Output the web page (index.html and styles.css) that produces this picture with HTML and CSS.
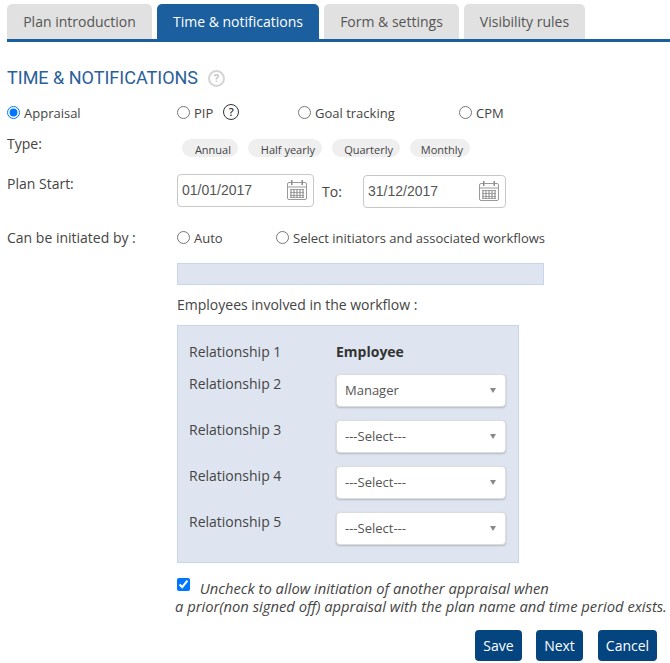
FILE: index.html
```html
<!DOCTYPE html>
<html lang="en">
<head>
    <meta charset="UTF-8">
    <meta name="viewport" content="width=device-width, initial-scale=1.0">
    <title>Time &amp; notifications</title>
    <link rel="stylesheet" href="styles.css">
</head>
<body>
    <div class="tabs">
        <a class="tab tab-intro">Plan introduction</a>
        <a class="tab tab-time active">Time &amp; notifications</a>
        <a class="tab tab-form">Form &amp; settings</a>
        <a class="tab tab-rules">Visibility rules</a>
    </div>

    <h2 class="title">TIME &amp; NOTIFICATIONS <span class="help-grey">?</span></h2>

    <div class="row row-plan">
        <label class="radio radio-first"><input type="radio" name="plan" checked>Appraisal</label>
        <div class="plan-options">
            <label class="radio opt-pip"><input type="radio" name="plan">PIP<span class="help-dark">?</span></label>
            <label class="radio opt-goal"><input type="radio" name="plan">Goal tracking</label>
            <label class="radio"><input type="radio" name="plan">CPM</label>
        </div>
    </div>

    <div class="row row-type">
        <div class="label">Type:</div>
        <div class="pills">
            <span class="pill pill-annual">Annual</span>
            <span class="pill pill-half">Half yearly</span>
            <span class="pill pill-quarter">Quarterly</span>
            <span class="pill pill-month">Monthly</span>
        </div>
    </div>

    <div class="row row-date">
        <div class="label">Plan Start:</div>
        <div class="dates">
            <div class="date">
                <span>01/01/2017</span>
                <svg class="cal" viewBox="0 0 20 20"><use href="#cal"></use></svg>
            </div>
            <span class="to">To:</span>
            <div class="date">
                <span>31/12/2017</span>
                <svg class="cal" viewBox="0 0 20 20"><use href="#cal"></use></svg>
            </div>
        </div>
    </div>

    <div class="row row-init">
        <div class="label">Can be initiated by :</div>
        <div class="init-options">
            <label class="radio opt-auto"><input type="radio" name="init">Auto</label>
            <label class="radio"><input type="radio" name="init">Select initiators and associated workflows</label>
        </div>
    </div>

    <div class="indent">
        <div class="blank-bar"></div>
        <div class="involved">Employees involved in the workflow :</div>
        <div class="panel">
            <div class="rel rel-first">
                <div class="rel-name">Relationship 1</div>
                <strong>Employee</strong>
            </div>
            <div class="rel">
                <div class="rel-name">Relationship 2</div>
                <div class="select"><select><option>Manager</option></select></div>
            </div>
            <div class="rel">
                <div class="rel-name">Relationship 3</div>
                <div class="select"><select><option>---Select---</option></select></div>
            </div>
            <div class="rel">
                <div class="rel-name">Relationship 4</div>
                <div class="select"><select><option>---Select---</option></select></div>
            </div>
            <div class="rel">
                <div class="rel-name">Relationship 5</div>
                <div class="select"><select><option>---Select---</option></select></div>
            </div>
        </div>
        <div class="note">
            <input type="checkbox" checked>
            <em class="note-first">Uncheck to allow initiation of another appraisal when</em>
            <em class="note-second">a prior(non signed off) appraisal with the plan name and time period exists.</em>
        </div>
    </div>

    <div class="actions">
        <button class="btn btn-save">Save</button>
        <button class="btn btn-next">Next</button>
        <button class="btn btn-cancel">Cancel</button>
    </div>

    <svg class="defs" width="0" height="0">
        <symbol id="cal" viewBox="0 0 20 20">
            <rect x="0.5" y="2.5" width="19" height="17" rx="1.5" fill="#fff" stroke="#9a9a9a"/>
            <path d="M1 7h18" stroke="#9a9a9a" stroke-width="1"/>
            <rect x="4" y="0" width="1.5" height="5" fill="#8c8c8c"/>
            <rect x="14.5" y="0" width="1.5" height="5" fill="#8c8c8c"/>
            <path d="M3 9.5h14M3 12.5h14M3 15.5h14M3 17.5h14" stroke="#a8a8a8" stroke-width="1"/>
            <path d="M4 9v9M7 9v9M10 9v9M13 9v9M16 9v9" stroke="#949494" stroke-width="1.2"/>
        </symbol>
    </svg>
</body>
</html>
```

FILE: styles.css
```css
body {
    margin: 0;
    padding: 4px 0 0 7px;
    font-family: "Open Sans", Arial, sans-serif;
    font-size: 14px;
    color: #444;
    background: #fff;
    overflow: hidden;
}
.tabs {
    display: flex;
    gap: 5px;
    height: 35px;
    border-bottom: 3px solid #1c5f9e;
}
.tab {
    display: block;
    height: 35px;
    line-height: 35px;
    text-align: center;
    font-size: 14px;
    border-radius: 5px 5px 0 0;
    background: #e1e1e1;
    color: #555;
}
.tab-intro { width: 145px; }
.tab-time { width: 162px; }
.tab-form { width: 135px; }
.tab-rules { width: 121px; }
.tab.active {
    background: #1c5f9e;
    color: #fff;
}
.title {
    margin: 25px 0 0;
    height: 22px;
    line-height: 22px;
    font-family: Roboto, Arial, sans-serif;
    font-size: 18px;
    font-weight: 400;
    color: #2a6099;
    display: flex;
    align-items: center;
}
.help-grey {
    width: 13px;
    height: 13px;
    margin-left: 10px;
    border: 2px solid #d4d4d4;
    border-radius: 50%;
    font-size: 11px;
    font-weight: 700;
    line-height: 13px;
    text-align: center;
    color: #c4c4c4;
}
.row {
    display: grid;
    grid-template-columns: 170px 1fr;
}
.radio {
    display: flex;
    align-items: center;
    font-size: 13px;
}
.radio input {
    width: 13px;
    height: 13px;
    margin: 0 4px 0 0;
    position: relative;
    top: -1px;
}
.row-plan {
    margin-top: 14px;
    height: 20px;
    align-items: center;
}
.plan-options, .init-options {
    display: flex;
}
.opt-pip { width: 121px; }
.opt-goal { width: 161px; }
.help-dark {
    width: 14px;
    height: 14px;
    margin: -3px 0 0 10px;
    border: 1px solid #333;
    border-radius: 50%;
    font-size: 11px;
    font-weight: 600;
    line-height: 14px;
    text-align: center;
    color: #333;
}
.row-type {
    margin-top: 11px;
    height: 31px;
}
.label {
    font-size: 14px;
    line-height: 20px;
}
.pills {
    display: flex;
    gap: 10px;
    margin-left: 5px;
    padding-top: 5px;
    align-items: flex-start;
}
.pill {
    box-sizing: border-box;
    height: 18px;
    padding-right: 7px;
    line-height: 22px;
    font-size: 11px;
    border-radius: 9px;
    background: #efefef;
    text-align: right;
    overflow: hidden;
}
.pill-annual { width: 56px; }
.pill-half { width: 74px; }
.pill-quarter { width: 68px; }
.pill-month { width: 60px; }
.row-date {
    margin-top: 9px;
    height: 34px;
}
.dates {
    display: flex;
    align-items: center;
}
.date {
    box-sizing: border-box;
    width: 137px;
    height: 33px;
    padding: 0 6px 0 4px;
    display: flex;
    align-items: center;
    justify-content: space-between;
    border: 1px solid #c8c8c8;
    border-radius: 4px;
    font-family: "Liberation Sans", Arial, sans-serif;
    font-size: 14px;
    color: #555;
}
.date:first-child { margin-top: -2px; }
.date:last-child { width: 143px; }
.to {
    width: 49px;
    padding-left: 8px;
    box-sizing: border-box;
    font-size: 14px;
}
.cal {
    width: 20px;
    height: 20px;
}
.row-init {
    margin-top: 20px;
    height: 20px;
}
.opt-auto { width: 99px; }
.indent {
    margin-left: 170px;
}
.blank-bar {
    box-sizing: border-box;
    width: 367px;
    height: 22px;
    margin-top: 15px;
    background: #dfe5f0;
    border: 1px solid #c9d6ea;
}
.involved {
    margin-top: 10px;
    height: 20px;
    line-height: 20px;
}
.panel {
    box-sizing: border-box;
    width: 342px;
    height: 238px;
    margin-top: 10px;
    padding: 16px 0 0 11px;
    background: #dfe5f0;
    border: 1px solid #c9d6ea;
}
.rel {
    display: grid;
    grid-template-columns: 147px 170px;
    height: 46px;
    line-height: 20px;
}
.rel-first {
    height: 32px;
}
.rel-first strong {
    line-height: 20px;
    color: #333;
}
.select {
    position: relative;
    height: 33px;
}
.select select {
    appearance: none;
    display: block;
    box-sizing: border-box;
    width: 100%;
    height: 33px;
    padding: 0 8px 2px;
    border: 1px solid #dcdcdc;
    border-radius: 4px;
    box-shadow: 0 1px 2px rgba(0, 0, 0, 0.2);
    background: #fff;
    font-family: "Open Sans", Arial, sans-serif;
    font-size: 13px;
    color: #555;
}
.select::after {
    content: "";
    position: absolute;
    top: 14px;
    right: 10px;
    border-top: 5px solid #888;
    border-left: 3.5px solid transparent;
    border-right: 3.5px solid transparent;
}
.note {
    margin-top: 15px;
    width: 495px;
    margin-left: -2px;
    font-size: 14.75px;
    line-height: 18px;
    color: #444;
}
.note input {
    width: 13px;
    height: 13px;
    margin: 0 6px 0 2px;
    vertical-align: 3px;
}
.note-second {
    display: block;
    white-space: nowrap;
}
.actions {
    display: flex;
    justify-content: flex-end;
    gap: 14px;
    width: 650px;
    margin-top: 15px;
}
.btn {
    height: 31px;
    padding: 0;
    border: 0;
    border-radius: 4px;
    background: #04447f;
    color: #fff;
    font-family: "Open Sans", Arial, sans-serif;
    font-size: 14px;
    font-weight: 500;
}
.btn-save, .btn-next { width: 47px; }
.btn-next { margin-right: 1px; }
.btn-cancel { width: 59px; }
.defs { position: absolute; }
```
